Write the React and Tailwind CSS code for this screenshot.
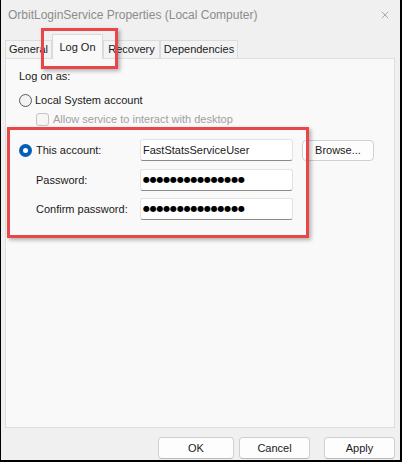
import { X } from "lucide-react";

const font = { fontFamily: '"Liberation Sans", "Segoe UI", Arial, sans-serif' };

function Tab({ label, selected, className = "" }) {
  if (selected) {
    return (
      <div className={`relative z-10 -mb-px h-[25px] flex items-center justify-center bg-[#f9f9f9] border border-b-0 border-[#d9d9d9] ${className}`}>
        <span className="text-[11px] text-[#1a1a1a] whitespace-nowrap">{label}</span>
      </div>
    );
  }
  return (
    <div className={`h-[18px] flex items-center justify-center bg-[#f3f3f3] border border-b-0 border-[#dcdcdc] ${className}`}>
      <span className="text-[11px] text-[#1a1a1a] whitespace-nowrap">{label}</span>
    </div>
  );
}

function Field({ children }) {
  return (
    <div className="w-[153px] h-[22px] bg-white border border-[#e3e3e3] border-b-[#8a8a8a] rounded-[3px] flex items-center px-[2px] text-[11px] text-[#1a1a1a]">
      {children}
    </div>
  );
}

function Dots() {
  return (
    <span className="text-[8px] tracking-[-0.2px] text-black leading-none" style={{ fontFamily: '"DejaVu Sans", sans-serif' }}>
      ●●●●●●●●●●●●●●●
    </span>
  );
}

function Button({ label, w }) {
  return (
    <div className={`${w} h-[22px] bg-[#fdfdfd] border border-[#d0d0d0] border-b-[#b8b8b8] rounded-[4px] flex items-center justify-center text-[11px] text-[#1a1a1a]`}>
      {label}
    </div>
  );
}

export default function App() {
  return (
    <div
      className="relative w-[402px] h-[462px] bg-[#f0f0f0] border-l border-r-2 border-b-2 border-black flex flex-col overflow-hidden"
      style={font}
    >
      {/* title bar */}
      <div className="h-[29px] flex items-center justify-between pl-[7px] pr-[9px]">
        <span className="text-[12px] text-[#8c8c8c] whitespace-nowrap">OrbitLoginService Properties (Local Computer)</span>
        <X size={12} strokeWidth={1.2} className="text-[#7a7a7a]" />
      </div>

      {/* tabs */}
      <div className="h-[29px] flex items-end pl-[4px]">
        <Tab label="General" className="w-[47px]" />
        <Tab label="Log On" selected className="w-[51px]" />
        <Tab label="Recovery" className="w-[57px]" />
        <Tab label="Dependencies" className="w-[78px]" />
      </div>

      {/* panel */}
      <div className="ml-[4px] mr-[5px] h-[370px] bg-[#f9f9f9] border border-[#dedede] flex flex-col pl-[13px] pt-[9px]">
        <div className="h-[16px] flex items-center text-[11px] text-[#1a1a1a]">Log on as:</div>

        <div className="mt-[8px] h-[16px] flex items-center gap-[3px]">
          <div className="w-[13px] h-[13px] rounded-full border border-[#5a5a5a] bg-[#f3f3f3]" />
          <span className="text-[11px] text-[#1a1a1a] whitespace-nowrap">Local System account</span>
        </div>

        <div className="mt-[3px] h-[16px] flex items-center gap-[4px] pl-[17px]">
          <div className="w-[13px] h-[13px] rounded-[3px] border border-[#c4c4c4] bg-[#f6f6f6]" />
          <span className="text-[11px] text-[#a0a0a0] whitespace-nowrap">Allow service to interact with desktop</span>
        </div>

        <div className="mt-[12px] h-[22px] flex items-center">
          <div className="w-[121px] flex items-center gap-[4px]">
            <div className="w-[13px] h-[13px] rounded-full bg-[#005fb8] flex items-center justify-center">
              <div className="w-[5px] h-[5px] rounded-full bg-white" />
            </div>
            <span className="text-[11px] text-[#1a1a1a] whitespace-nowrap">This account:</span>
          </div>
          <Field>FastStatsServiceUser</Field>
          <div className="ml-[9px] w-[72px] h-[21px] bg-[#fdfdfd] border border-[#d0d0d0] rounded-[4px] flex items-center justify-center text-[11px] text-[#1a1a1a]">
            Browse...
          </div>
        </div>

        <div className="mt-[8px] h-[22px] flex items-center">
          <div className="w-[121px] pl-[17px] text-[11px] text-[#1a1a1a] whitespace-nowrap">Password:</div>
          <Field>
            <Dots />
          </Field>
        </div>

        <div className="mt-[7px] h-[22px] flex items-center">
          <div className="w-[121px] pl-[17px] text-[11px] text-[#1a1a1a] whitespace-nowrap">Confirm password:</div>
          <Field>
            <Dots />
          </Field>
        </div>
      </div>

      {/* buttons */}
      <div className="flex justify-end pr-[5px] pt-[9px] gap-[5px]">
        <Button label="OK" w="w-[76px]" />
        <Button label="Cancel" w="w-[71px]" />
        <div className="w-[4px]" />
        <Button label="Apply" w="w-[71px]" />
      </div>

      {/* callout highlights */}
      <div className="absolute left-[40px] top-[28px] w-[77px] h-[41px] border-[3px] border-[#e9464a] shadow-[2px_2px_4px_rgba(0,0,0,0.3)] pointer-events-none" />
      <div className="absolute left-[6px] top-[127px] w-[302px] h-[111px] border-[3px] border-[#e9464a] shadow-[2px_2px_4px_rgba(0,0,0,0.3)] pointer-events-none" />
    </div>
  );
}
